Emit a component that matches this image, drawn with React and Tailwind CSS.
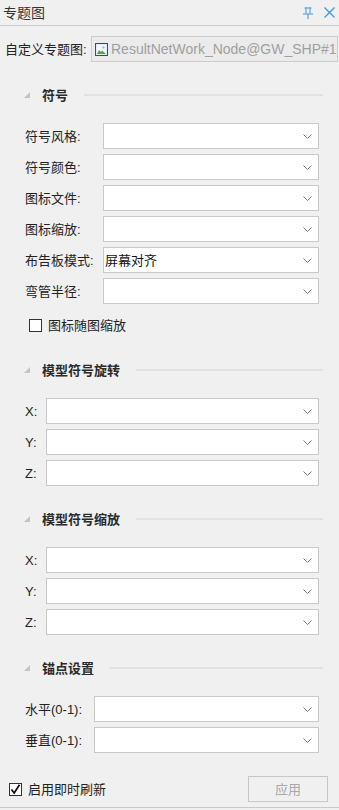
import React from "react";

const FONT = { fontFamily: '"Liberation Sans", "Noto Sans CJK SC", sans-serif' };

function Chevron() {
  return (
    <svg width="9" height="5" viewBox="0 0 9 5" className="shrink-0">
      <polyline points="0.5,0.5 4.5,4.5 8.5,0.5" fill="none" stroke="#7a7a7a" strokeWidth="1" />
    </svg>
  );
}

function Dropdown({ value }) {
  return (
    <div className="flex-1 h-[26px] bg-white border border-[#c9c9c9] flex items-center pl-[1px] pr-[6px]">
      <span className="flex-1 text-[13px] text-[#111] leading-none">{value || ""}</span>
      <Chevron />
    </div>
  );
}

function Row({ label, labelW, value }) {
  return (
    <div className="flex items-center h-[26px] pl-[25px] pr-[20px]">
      <div className={`${labelW} shrink-0 text-[13px] text-[#222] leading-none`}>{label}</div>
      <Dropdown value={value} />
    </div>
  );
}

function Header({ title, mt }) {
  return (
    <div className={`${mt} flex items-center h-[16px] pl-[24px] pr-[16px]`}>
      <svg width="6" height="6" viewBox="0 0 6 6" className="shrink-0">
        <polygon points="6,0 6,6 0,6" fill="#c4c4c4" />
      </svg>
      <span className="ml-[12px] text-[13px] font-bold text-[#2a2a2a] leading-none">{title}</span>
      <div className="flex-1 ml-[16px] h-[2px] bg-[#e2e2e2]" />
    </div>
  );
}

function Checkbox({ checked }) {
  return (
    <div className="w-[13px] h-[13px] border border-[#333] bg-white flex items-center justify-center shrink-0">
      {checked && (
        <svg width="11" height="11" viewBox="0 0 11 11">
          <polyline points="1.5,5.5 4.2,9 9.5,0.8" fill="none" stroke="#111" strokeWidth="1.8" />
        </svg>
      )}
    </div>
  );
}

export default function App() {
  return (
    <div className="w-[339px] h-[810px] bg-[#f0f0f0] flex flex-col overflow-hidden" style={FONT}>
      {/* title bar */}
      <div className="h-[26px] shrink-0 flex items-center pl-[3px] pr-[4px] border-b border-[#cacaca]">
        <span className="flex-1 text-[14px] text-[#333] leading-none">专题图</span>
        <svg width="10" height="12" viewBox="0 0 10 12" className="mr-[11px]">
          <rect x="1.5" y="0.5" width="7" height="1" fill="#3a98dc" />
          <rect x="2.5" y="0.5" width="1" height="6" fill="#3a98dc" />
          <rect x="6.5" y="0.5" width="1" height="6" fill="#3a98dc" />
          <rect x="0" y="6.5" width="10" height="1" fill="#3a98dc" />
          <rect x="4.5" y="7" width="1" height="5" fill="#3a98dc" />
        </svg>
        <svg width="11" height="11" viewBox="0 0 11 11">
          <line x1="0.5" y1="0.5" x2="10.5" y2="10.5" stroke="#3a98dc" strokeWidth="1.2" />
          <line x1="10.5" y1="0.5" x2="0.5" y2="10.5" stroke="#3a98dc" strokeWidth="1.2" />
        </svg>
      </div>

      {/* custom thematic map */}
      <div className="mt-[10px] h-[26px] flex items-center pl-[5px] pr-[6px]">
        <span className="w-[86px] shrink-0 text-[13px] text-[#222] leading-none">自定义专题图:</span>
        <div className="flex-1 h-[26px] bg-[#ebebeb] border border-[#cdcdcd] flex items-center pl-[3px]">
          <svg width="13" height="13" viewBox="0 0 13 13" className="shrink-0">
            <rect x="0.5" y="0.5" width="12" height="12" fill="#dfeaf5" stroke="#3d4c66" />
            <rect x="2" y="2" width="9" height="9" fill="#f4f8fc" />
            <path d="M2 11 L4 7 L6 9 L7 7.5 L11 11 Z" fill="#5aa04a" />
            <circle cx="8.5" cy="4.5" r="1.2" fill="#8cc0e8" />
          </svg>
          <span className="ml-[3px] text-[14px] text-[#a0a0a0] leading-none whitespace-nowrap">ResultNetWork_Node@GW_SHP#1</span>
        </div>
      </div>

      {/* 符号 */}
      <Header title="符号" mt="mt-[25px]" />
      <div className="mt-[20px] flex flex-col gap-[5px]">
        <Row label="符号风格:" labelW="w-[78px]" />
        <Row label="符号颜色:" labelW="w-[78px]" />
        <Row label="图标文件:" labelW="w-[78px]" />
        <Row label="图标缩放:" labelW="w-[78px]" />
        <Row label="布告板模式:" labelW="w-[78px]" value="屏幕对齐" />
        <Row label="弯管半径:" labelW="w-[78px]" />
      </div>
      <div className="mt-[13px] h-[16px] flex items-center pl-[29px]">
        <Checkbox />
        <span className="ml-[6px] text-[13px] text-[#222] leading-none">图标随图缩放</span>
      </div>

      {/* 模型符号旋转 */}
      <Header title="模型符号旋转" mt="mt-[29px]" />
      <div className="mt-[20px] flex flex-col gap-[5px]">
        <Row label="X:" labelW="w-[21px]" />
        <Row label="Y:" labelW="w-[21px]" />
        <Row label="Z:" labelW="w-[21px]" />
      </div>

      {/* 模型符号缩放 */}
      <Header title="模型符号缩放" mt="mt-[25px]" />
      <div className="mt-[20px] flex flex-col gap-[5px]">
        <Row label="X:" labelW="w-[21px]" />
        <Row label="Y:" labelW="w-[21px]" />
        <Row label="Z:" labelW="w-[21px]" />
      </div>

      {/* 锚点设置 */}
      <Header title="锚点设置" mt="mt-[25px]" />
      <div className="mt-[20px] flex flex-col gap-[5px]">
        <Row label="水平(0-1):" labelW="w-[69px]" />
        <Row label="垂直(0-1):" labelW="w-[69px]" />
      </div>

      {/* bottom */}
      <div className="mt-[23px] h-[26px] flex items-center pl-[9px] pr-[11px]">
        <Checkbox checked />
        <span className="ml-[6px] flex-1 text-[13px] text-[#222] leading-none">启用即时刷新</span>
        <div className="w-[80px] h-[26px] border border-[#c6c6c6] flex items-center justify-center text-[13px] text-[#a8a8a8] leading-none">
          应用
        </div>
      </div>
      <div className="mt-[5px] h-[1px] bg-[#c9c9c9]" />
    </div>
  );
}
